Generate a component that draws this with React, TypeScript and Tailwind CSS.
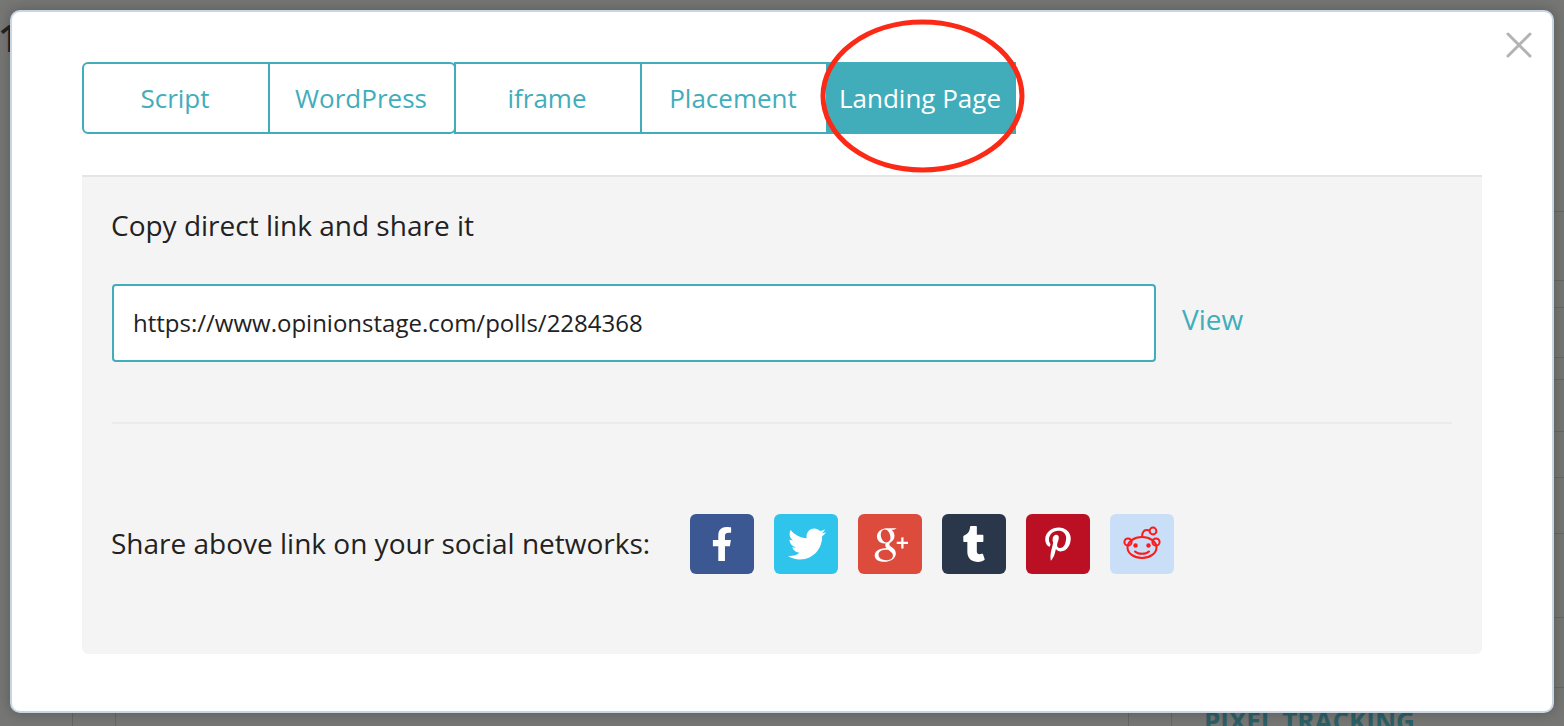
import React from "react";
import { FaFacebookF, FaTwitter, FaTumblr, FaPinterestP } from "react-icons/fa";
import { TiSocialGooglePlus } from "react-icons/ti";

const Reddit = () => (
  <svg width="40" height="36" viewBox="0 0 40 36" fill="none" stroke="#ff1a1a" strokeWidth="2">
    <ellipse cx="20" cy="21.5" rx="14.5" ry="10.5" />
    <circle cx="6" cy="16" r="3.6" />
    <circle cx="34" cy="16" r="3.6" />
    <circle cx="31" cy="5" r="3.4" />
    <path d="M20 11 C20 6 22 3 27.6 4.5" />
    <circle cx="13.5" cy="19.5" r="2.2" fill="#ff1a1a" stroke="none" />
    <circle cx="26.5" cy="19.5" r="2.2" fill="#ff1a1a" stroke="none" />
    <path d="M13 25.5 C16 28.5 24 28.5 27 25.5" strokeLinecap="round" />
  </svg>
);

const tabClass =
  "-ml-[2px] first:ml-0 h-[72px] w-[188px] border-2 border-[#41adbb] pr-[2px] text-[26px] font-[450] text-[#41adbb] flex items-center justify-center";

const sideLines = [211, 280, 307, 357, 379, 431, 477, 533, 617, 687];

export default function App() {
  return (
    <div className="relative h-[726px] w-full overflow-hidden bg-[#767674] pl-[10px] pt-[10px] font-['Open_Sans',sans-serif]">
      <span className="absolute -left-[2px] top-[18px] text-[38px] font-semibold leading-[38px] text-[#222]">1</span>
      <span className="absolute left-[72px] top-[713px] h-[13px] w-[1px] bg-[#666]" />
      <span className="absolute left-[115px] top-[713px] h-[13px] w-[1px] bg-[#666]" />
      <span className="absolute left-[1128px] top-[713px] h-[13px] w-[1px] bg-[#666]" />
      <span className="absolute left-[1171px] top-[713px] h-[13px] w-[1px] bg-[#666]" />
      {sideLines.map((y) => (
        <span key={y} className="absolute left-[1554px] h-[1px] w-[10px] bg-[#686866]" style={{ top: y }} />
      ))}
      <span className="absolute left-[1204px] top-[703px] text-[26px] font-bold leading-[36px] text-[#2c5f66]">
        PIXEL TRACKING
      </span>

      <div className="relative h-[703px] w-[1544px] rounded-[10px] border-2 border-[#c8d6e3] bg-white pl-[70px] pt-[50px] shadow-[0_0_14px_rgba(0,0,0,0.25)]">
        <button className="absolute right-[20px] top-[20px] text-[#b3b3b3]" aria-label="Close">
          <svg width="26" height="26" viewBox="0 0 26 26" stroke="currentColor" strokeWidth="3" strokeLinecap="round">
            <path d="M2 2 L24 24 M24 2 L2 24" />
          </svg>
        </button>

        <div className="flex">
          <div className={`${tabClass} rounded-l-[6px]`}>Script</div>
          <div className={`${tabClass} rounded-r-[6px]`}>WordPress</div>
          <div className={tabClass}>iframe</div>
          <div className={tabClass}>Placement</div>
          <div className="-ml-[2px] flex h-[72px] w-[190px] items-center justify-center bg-[#41adbb] pr-[2px] text-[26px] font-[450] text-white">
            Landing Page
          </div>
        </div>

        <div className="mt-[41px] h-[479px] w-[1400px] rounded-b-[6px] border-t-2 border-[#e5e5e5] bg-[#f4f4f4] px-[30px] pt-[28px] text-[#222]">
          <p className="-ml-[1px] text-[28px] leading-[40px]">Copy direct link and share it</p>
          <div className="mt-[39px] flex items-center">
            <div className="flex h-[78px] w-[1044px] items-center rounded-[4px] border-2 border-[#41adbb] bg-white pl-[19px] text-[24px]">
              https://www.opinionstage.com/polls/2284368
            </div>
            <a className="-mt-[8px] ml-[26px] text-[28px] font-[450] text-[#41adbb]">View</a>
          </div>
          <div className="mt-[60px] h-[2px] w-[1340px] bg-[#ebebeb]" />
          <div className="mt-[90px] flex items-center">
            <span className="-ml-[1px] -mt-[2px] w-[579px] text-[28px] leading-[40px]">Share above link on your social networks:</span>
            <div className="flex gap-[20px]">
              <div className="flex h-[60px] w-[64px] items-center justify-center rounded-[6px] bg-[#3b5892] text-[34px] text-white"><FaFacebookF /></div>
              <div className="flex h-[60px] w-[64px] items-center justify-center rounded-[6px] bg-[#2fc4ec] pl-[2px] text-[38px] text-white"><FaTwitter /></div>
              <div className="flex h-[60px] w-[64px] items-center justify-center rounded-[6px] bg-[#dd4b3d] text-[54px] text-white"><TiSocialGooglePlus /></div>
              <div className="flex h-[60px] w-[64px] items-center justify-center rounded-[6px] bg-[#2a374b] text-[36px] text-white"><FaTumblr /></div>
              <div className="flex h-[60px] w-[64px] items-center justify-center rounded-[6px] bg-[#bb1024] text-[34px] text-white"><FaPinterestP /></div>
              <div className="flex h-[60px] w-[64px] items-center justify-center rounded-[6px] bg-[#c8dff7]"><Reddit /></div>
            </div>
          </div>
        </div>
      </div>

      <svg className="pointer-events-none absolute left-[815px] top-[14px]" width="216" height="164" viewBox="0 0 216 164" fill="none">
        <ellipse cx="107.5" cy="82" rx="99.5" ry="74" stroke="#fb2a17" strokeWidth="5" />
      </svg>
    </div>
  );
}
